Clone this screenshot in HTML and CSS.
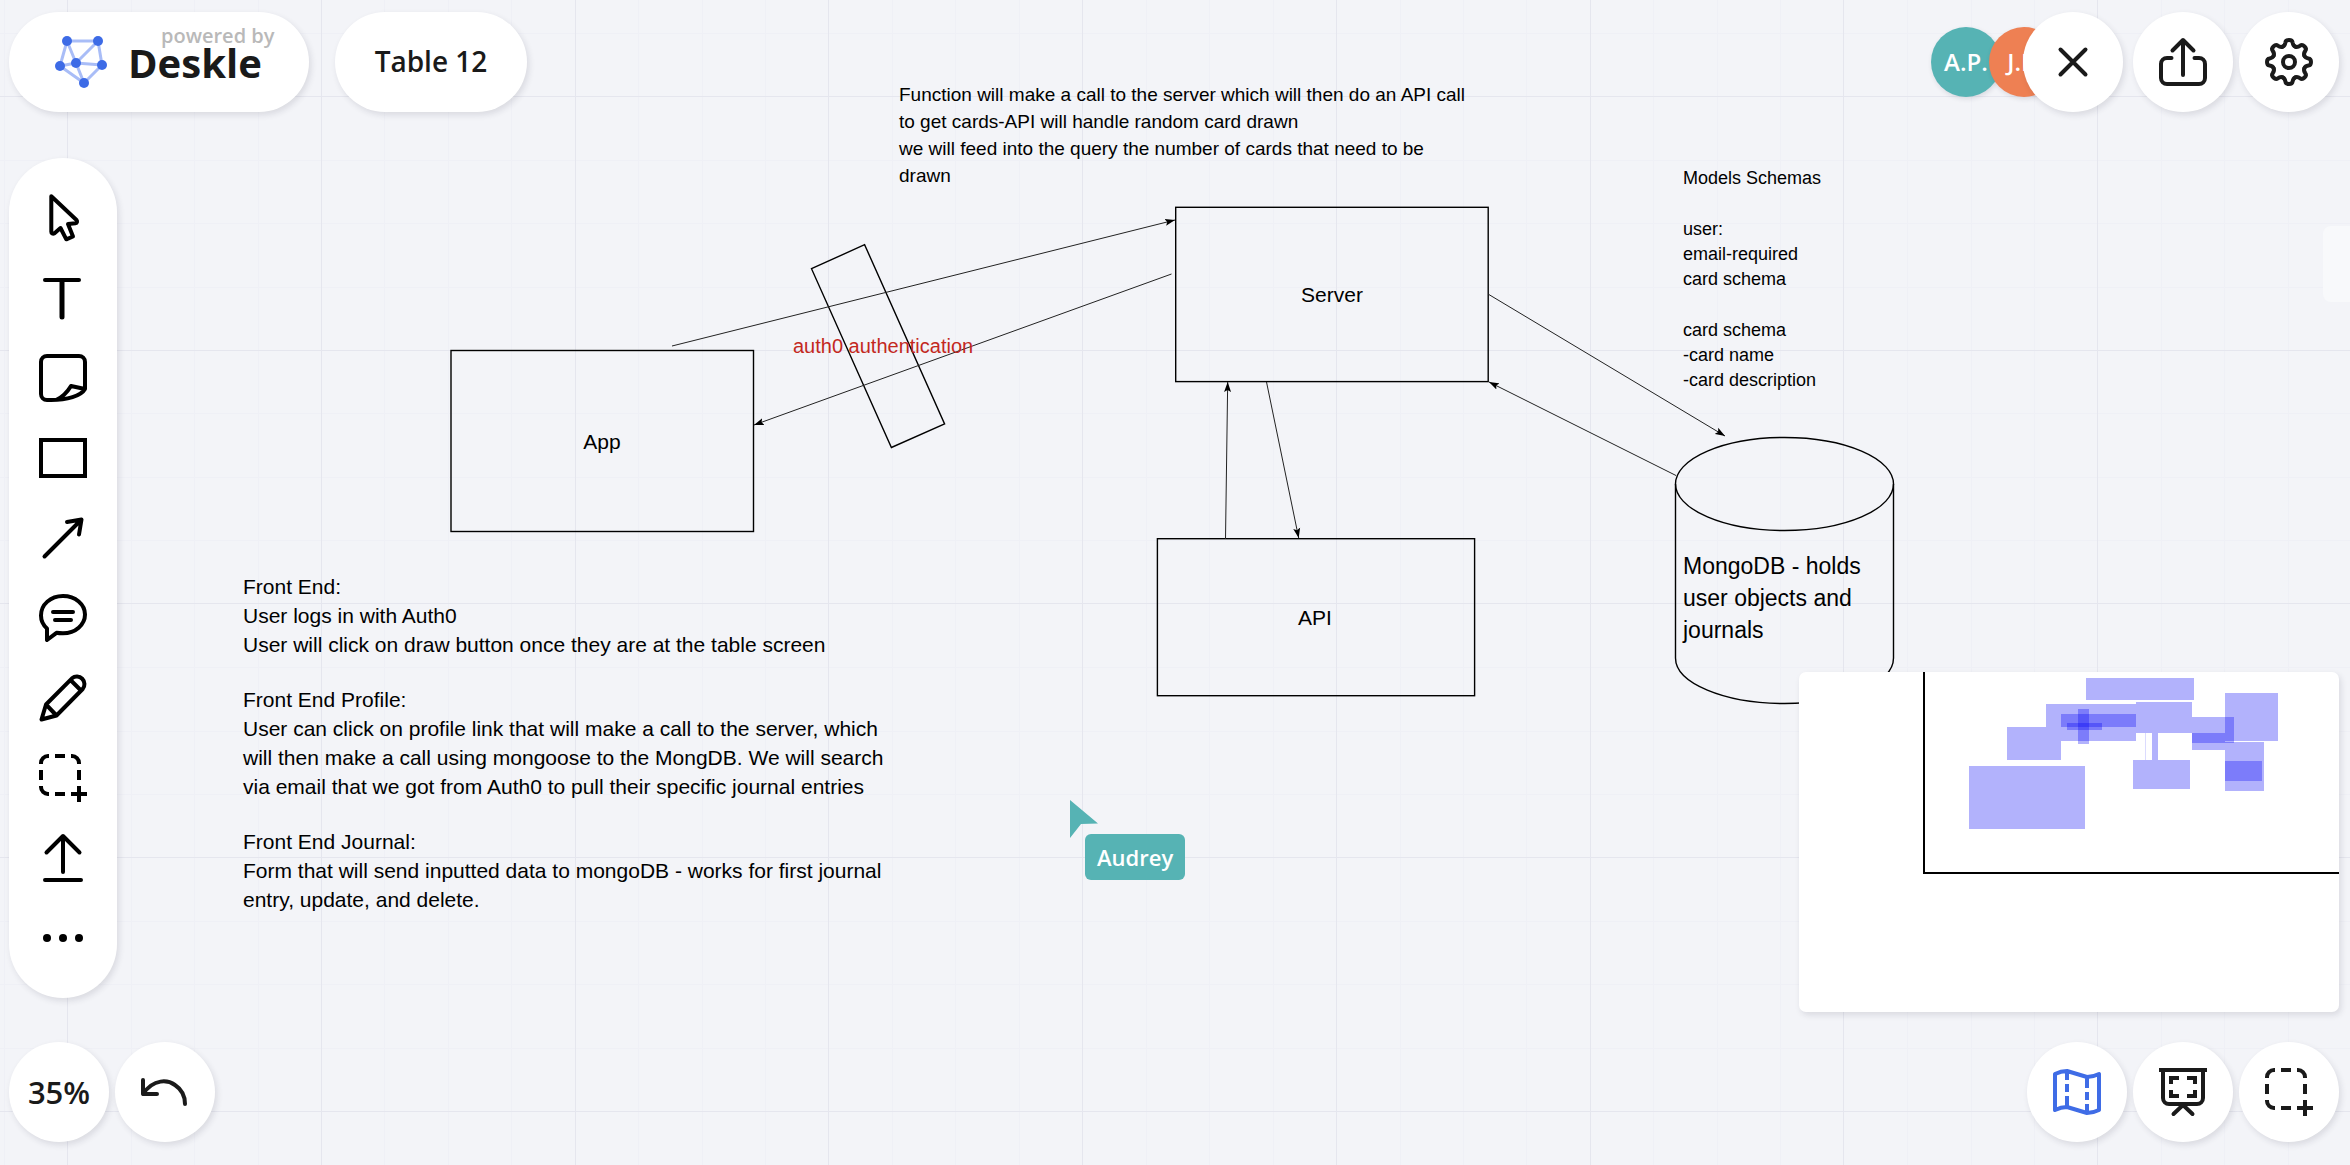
FILE: index.html
```html
<!DOCTYPE html>
<html lang="en">
<head>
<meta charset="utf-8">
<meta name="viewport" content="width=device-width, initial-scale=1">
<title>Table 12 - Deskle</title>
<link rel="stylesheet" href="styles.css">
</head>
<body>
<div class="board">

  <section class="canvas" aria-label="Board canvas">
    <svg class="canvas-art" aria-hidden="true">
      <defs>
        <marker id="head" viewBox="0 0 10 8" refX="10" refY="4" markerWidth="10" markerHeight="8" markerUnits="userSpaceOnUse" orient="auto">
          <path d="M0 0.5L10 4L0 7.5L2 4z" fill="#000"/>
        </marker>
      </defs>
      <path class="grid-minor" d="M4 0v4000M131 0v4000M194 0v4000M258 0v4000M384 0v4000M448 0v4000M511 0v4000M638 0v4000M702 0v4000M765 0v4000M892 0v4000M955 0v4000M1019 0v4000M1146 0v4000M1209 0v4000M1273 0v4000M1400 0v4000M1463 0v4000M1526 0v4000M1653 0v4000M1717 0v4000M1780 0v4000M1907 0v4000M1971 0v4000M2034 0v4000M2161 0v4000M2224 0v4000M2288 0v4000M0 33h6000M0 160h6000M0 223h6000M0 287h6000M0 413h6000M0 477h6000M0 540h6000M0 667h6000M0 731h6000M0 794h6000M0 921h6000M0 984h6000M0 1048h6000"/>
      <path class="grid-major" d="M67 0v4000M321 0v4000M575 0v4000M828 0v4000M1082 0v4000M1336 0v4000M1590 0v4000M1843 0v4000M2097 0v4000M0 96h6000M0 350h6000M0 603h6000M0 857h6000M0 1111h6000"/>
      <g class="shape">
        <rect x="451" y="350.5" width="302.500" height="181"/>
        <rect x="1175.700" y="207.300" width="312.500" height="174.300"/>
        <rect x="1157.400" y="538.700" width="317.200" height="157"/>
        <path d="M811.500 268.700L864.600 244.700L944.600 424L891.400 447.500z"/>
        <ellipse cx="1784.500" cy="484" rx="109" ry="46.500"/>
        <path d="M1675.500 484V658C1675.500 683 1724 703.500 1784.500 703.500S1893.500 683 1893.500 658V484"/>
      </g>
      <g class="arrow">
        <path d="M672 346L1175 220"/>
        <path d="M1171.500 274L754 425"/>
        <path d="M1488 294L1725 436"/>
        <path d="M1676 475.500L1489 382"/>
        <path d="M1225.500 539L1227.700 382"/>
        <path d="M1266.500 382L1298.700 538"/>
      </g>
      <g class="label">
        <text x="602" y="449">App</text>
        <text x="1332" y="302">Server</text>
        <text x="1315" y="625">API</text>
      </g>
    </svg>

    <p class="note note-function">Function will make a call to the server which will then do an API call<br>to get cards-API will handle random card drawn<br>we will feed into the query the number of cards that need to be<br>drawn</p>
    <p class="note note-auth">auth0 authentication</p>
    <p class="note note-mongo">MongoDB - holds<br>user objects and<br>journals</p>
    <div class="note note-models">
      <p>Models Schemas</p>
      <p>user:<br>email-required<br>card schema</p>
      <p>card schema<br>-card name<br>-card description</p>
    </div>
    <div class="note note-front">
      <p>Front End:<br>User logs in with Auth0<br>User will click on draw button once they are at the table screen</p>
      <p>Front End Profile:<br>User can click on profile link that will make a call to the server, which<br>will then make a call using mongoose to the MongDB. We will search<br>via email that we got from Auth0 to pull their specific journal entries</p>
      <p>Front End Journal:<br>Form that will send inputted data to mongoDB - works for first journal<br>entry, update, and delete.</p>
    </div>

    <div class="peer">
      <svg width="28" height="38" viewBox="0 0 28 38" aria-hidden="true"><path d="M0 0L28 23.500L11 24L0 38z" fill="#56b3b4"/></svg>
      <span class="peer-name">Audrey</span>
    </div>
  </section>

  <header class="topbar">
    <a class="pill brand" href="#">
      <svg width="54" height="54" viewBox="0 0 54 54" aria-hidden="true">
        <path d="M13 6H44M13 6L6 31M13 6L22 28M44 6L22 28M44 6L48 30M6 31L22 28M6 31L30 48M22 28L48 30M22 28L30 48M48 30L30 48" stroke="#a9bdf7" stroke-width="3" fill="none"/>
        <g fill="#3d6be6"><circle cx="13" cy="6" r="5"/><circle cx="44" cy="6" r="5"/><circle cx="6" cy="31" r="5"/><circle cx="22" cy="28" r="5"/><circle cx="48" cy="30" r="5"/><circle cx="30" cy="48" r="5"/></g>
      </svg>
      <span class="brand-text"><span class="brand-by">powered by</span><span class="brand-name">Deskle</span></span>
    </a>
    <button class="pill title" type="button">Table 12</button>
    <div class="people">
      <span class="avatar avatar-teal">A.P.</span>
      <span class="avatar avatar-orange">J.L.</span>
      <button class="round close" type="button" aria-label="Close">
        <svg class="icon" viewBox="0 0 48 48"><path d="M11.500 11.500L36.500 36.500M36.500 11.500L11.500 36.500"/></svg>
      </button>
    </div>
    <button class="round share" type="button" aria-label="Share">
      <svg class="icon" viewBox="0 0 48 48"><path d="M24 37V3M13.500 12.500L24 2L34.500 12.500M12.500 20H8a6 6 0 0 0-6 6V40a6 6 0 0 0 6 6H40a6 6 0 0 0 6-6V26a6 6 0 0 0-6-6H35.500"/></svg>
    </button>
    <button class="round" type="button" aria-label="Settings">
      <svg class="icon" viewBox="-24 -24 48 48">
        <circle r="6"/>
        <path id="tooth" d="M-6.400 -15.300C-4.600 -16 -3.900 -17.600 -3.600 -19.500C-3.200 -22.800 3.200 -22.800 3.600 -19.500C3.900 -17.600 4.600 -16 6.400 -15.300"/>
        <use href="#tooth" transform="rotate(45)"/><use href="#tooth" transform="rotate(90)"/><use href="#tooth" transform="rotate(135)"/><use href="#tooth" transform="rotate(180)"/><use href="#tooth" transform="rotate(225)"/><use href="#tooth" transform="rotate(270)"/><use href="#tooth" transform="rotate(315)"/>
      </svg>
    </button>
  </header>

  <main class="middle">
    <nav class="tools" aria-label="Tools">
      <button class="tool" type="button" aria-label="Select"><svg class="icon" viewBox="0 0 48 48"><path d="M12.300 2.300L37.500 26C38.600 27.500 38 29 36.500 29.200L29 30L34 42.500L27.300 45.300L21.500 34L15.500 39.300C13.800 40.300 12.300 39.500 12.300 37.700z"/></svg></button>
      <button class="tool" type="button" aria-label="Text"><svg class="icon" viewBox="0 0 48 48"><path d="M6 6H40"/><path d="M23 7V43" stroke-width="5"/></svg></button>
      <button class="tool" type="button" aria-label="Sticky note"><svg class="icon" viewBox="0 0 48 48"><path d="M46 35V8a6 6 0 0 0-6-6H8a6 6 0 0 0-6 6V40a6 6 0 0 0 6 6H12C28 46 42 42 46 35L32 32C29 37 24 43 17 46" stroke-linejoin="round"/></svg></button>
      <button class="tool" type="button" aria-label="Shape"><svg class="icon square" viewBox="0 0 48 48"><path d="M2 6H46V42H2z"/></svg></button>
      <button class="tool" type="button" aria-label="Arrow"><svg class="icon" viewBox="0 0 48 48"><path d="M5.500 42.500L42 6M28 8L42.500 5.500L40 20.500"/></svg></button>
      <button class="tool" type="button" aria-label="Comment"><svg class="icon" viewBox="0 0 48 48"><path d="M8 46V34.500C4 31 2 26.500 2 21.500C2 10.500 11.500 2 24 2S46 10.500 46 20.500S36.500 39.300 24 39.300C21.500 39.300 19.500 39.200 17.500 38.800zM14 18H34M16 26H32"/></svg></button>
      <button class="tool" type="button" aria-label="Pencil"><svg class="icon" viewBox="0 0 48 48"><path d="M2.500 45.500L7 30.500L33 4.300A7.600 7.600 0 0 1 43.700 15L17.500 41.500zM7 30.500L17.500 41.500M31.500 6L42 16.500"/></svg></button>
      <button class="tool" type="button" aria-label="Frame"><svg class="icon square" viewBox="0 0 48 48"><path d="M10 2H9A7 7 0 0 0 2 9V10M32 2H33A7 7 0 0 1 40 9V10M2 32V33A7 7 0 0 0 9 40H10M16 2H26M16 40H26M2 16V26M40 16V26M32 40H48M40 32V48"/></svg></button>
      <button class="tool" type="button" aria-label="Upload"><svg class="icon" viewBox="0 0 48 48"><path d="M24 38V2M7.500 18.500L24 2L40.500 18.500M6 46H42"/></svg></button>
      <button class="tool" type="button" aria-label="More"><svg class="icon dots" viewBox="0 0 48 48"><circle cx="8" cy="24" r="4"/><circle cx="24" cy="24" r="4"/><circle cx="40" cy="24" r="4"/></svg></button>
    </nav>

    <aside class="side">
      <div class="side-tab"></div>
      <div class="minimap">
        <svg viewBox="0 0 540 340" role="img" aria-label="Map of the board">
          <g fill="#0000f5" fill-opacity=".3">
            <rect x="287" y="6" width="108" height="22"/>
            <rect x="426" y="21" width="53" height="48"/>
            <rect x="247" y="32" width="90" height="23"/>
            <rect x="262" y="42" width="75" height="27"/>
            <rect x="279" y="37" width="11" height="35"/>
            <rect x="268" y="51" width="35" height="7"/>
            <rect x="337" y="30" width="56" height="31"/>
            <rect x="208" y="55" width="54" height="33"/>
            <rect x="170" y="94" width="116" height="63"/>
            <rect x="346" y="61" width="1" height="27" fill-opacity=".14"/>
            <rect x="353" y="61" width="6" height="27"/>
            <rect x="334" y="88" width="57" height="29"/>
            <rect x="393" y="45" width="42" height="26"/>
            <rect x="393" y="61" width="33" height="17"/>
            <rect x="426" y="70" width="39" height="49"/>
            <rect x="426" y="89" width="37" height="20"/>
          </g>
          <path d="M125 0V201H540" fill="none" stroke="#000" stroke-width="2"/>
        </svg>
      </div>
    </aside>
  </main>

  <footer class="bottombar">
    <button class="round zoom" type="button">35%</button>
    <button class="round" type="button" aria-label="Undo"><svg class="icon" viewBox="0 0 48 48"><path d="M2 12V26H16M2 26C13 10 27 12 34 17C40 21 44 28 44 36"/></svg></button>
    <span class="spacer"></span>
    <button class="round active" type="button" aria-label="Map"><svg class="icon butt" viewBox="0 0 48 48"><path d="M2 6Q8 3 14 3Q24 6 34 9Q40 9 46 6V42Q40 45 34 45Q24 42 14 39Q8 39 2 42zM14 4V12M14 16V24M14 28V38M34 9V20M34 24V32M34 36V45"/></svg></button>
    <button class="round" type="button" aria-label="Present"><svg class="icon" viewBox="0 0 48 48"><path stroke-linecap="butt" class="butt" d="M0 2H48"/><path d="M4 3V30a6 6 0 0 0 6 6H38a6 6 0 0 0 6-6V3M24 37L14.500 46M24 37L33.500 46"/><path class="corners" d="M20 10H12V16M28 10H36V16M20 28H12V22M28 28H36V22"/></svg></button>
    <button class="round" type="button" aria-label="Add frame"><svg class="icon square" viewBox="0 0 48 48"><path d="M10 2H9A7 7 0 0 0 2 9V10M32 2H33A7 7 0 0 1 40 9V10M2 32V33A7 7 0 0 0 9 40H10M16 2H26M16 40H26M2 16V26M40 16V26M32 40H48M40 32V48"/></svg></button>
  </footer>
</div>
</body>
</html>
```
FILE: styles.css
```css
* {
  box-sizing: border-box;
}

body {
  margin: 0;
  background: #f3f4f8;
  color: #1a1a1a;
  font-family: "Open Sans", "Noto Sans", sans-serif;
}

button {
  border: 0;
  padding: 0;
  color: inherit;
  font: inherit;
  cursor: pointer;
}

.board {
  position: relative;
  display: flex;
  flex-direction: column;
  min-height: 100vh;
  overflow: hidden;
}

/* Canvas: free-placed items under the interface */
.canvas {
  position: absolute;
  inset: 0;
  overflow: hidden;
  color: #000;
  font-family: "Liberation Sans", Arial, sans-serif;
}

.canvas-art {
  position: absolute;
  inset: 0;
  width: 100%;
  height: 100%;
}

.grid-minor,
.grid-major {
  fill: none;
  stroke: #eff0f6;
  stroke-width: 1;
  shape-rendering: crispEdges;
}

.grid-major {
  stroke: #e5e6ee;
}

.shape {
  fill: none;
  stroke: #000;
  stroke-width: 1.4;
}

.arrow {
  fill: none;
  stroke: #222;
  stroke-width: 1;
}

.arrow path {
  marker-end: url(#head);
}

.label {
  font-size: 21px;
  text-anchor: middle;
}

.note {
  position: absolute;
  margin: 0;
  white-space: nowrap;
}

.note p {
  margin: 0;
}

.note-function {
  left: 899px;
  top: 81px;
  font-size: 19px;
  line-height: 27px;
}

.note-auth {
  left: 793px;
  top: 332px;
  color: #c3281e;
  font-size: 20px;
  line-height: 29px;
}

.note-mongo {
  left: 1683px;
  top: 550px;
  font-size: 23px;
  line-height: 32px;
}

.note-models {
  left: 1683px;
  top: 166px;
  font-size: 18px;
  line-height: 25px;
}

.note-front {
  left: 243px;
  top: 572px;
  font-size: 21px;
  line-height: 29px;
}

.note-models,
.note-front {
  display: flex;
  flex-direction: column;
  gap: 26px;
}

.peer {
  position: absolute;
  left: 1070px;
  top: 800px;
  font-family: "Open Sans", "Noto Sans", sans-serif;
}

.peer svg {
  display: block;
}

.peer-name {
  position: absolute;
  left: 15px;
  top: 34px;
  padding: 0 12px;
  border-radius: 6px;
  background: #56b3b4;
  color: #fff;
  font-size: 22px;
  font-weight: 600;
  line-height: 46px;
}

/* Interface */
.topbar,
.bottombar {
  position: relative;
  display: flex;
  align-items: center;
  gap: 6px;
  padding: 12px 11px 0 9px;
}

.bottombar {
  padding: 0 11px 23px 9px;
}

.pill,
.round,
.tools,
.minimap {
  background: #fff;
  box-shadow: 2px 3px 6px rgba(30, 35, 60, 0.12);
}

.pill {
  height: 100px;
  border-radius: 50px;
}

.brand {
  display: flex;
  align-items: center;
  gap: 20px;
  width: 300px;
  padding: 0 0 0 45px;
  color: inherit;
  text-decoration: none;
}

.brand-text {
  display: flex;
  flex-direction: column;
  padding-bottom: 18px;
}

.brand-by {
  padding-left: 33px;
  color: #b9b9b9;
  font-size: 20px;
  font-weight: 600;
  line-height: 20px;
}

.brand-name {
  font-size: 40px;
  font-weight: 700;
  line-height: 34px;
}

.title {
  width: 192px;
  margin: 0 auto 0 20px;
  padding-bottom: 2px;
  font-size: 28px;
  font-weight: 600;
}

.people {
  display: flex;
  align-items: center;
}

.avatar {
  width: 70px;
  height: 70px;
  margin-right: -12px;
  border-radius: 50%;
  box-shadow: 1px 2px 5px rgba(30, 35, 60, 0.12);
  color: #fff;
  font-size: 24px;
  font-weight: 600;
  line-height: 70px;
  text-align: center;
}

.avatar-teal {
  background: #56b3b4;
}

.avatar-orange {
  position: relative;
  margin-right: -36px;
  background: #ee8053;
}

.round {
  position: relative;
  display: flex;
  flex: none;
  align-items: center;
  justify-content: center;
  width: 100px;
  height: 100px;
  border-radius: 50%;
}

.share {
  margin-left: 4px;
}

.zoom {
  font-size: 31px;
  font-weight: 600;
}

.active {
  color: #3f6ce6;
}

.icon {
  display: block;
  width: 48px;
  height: 48px;
  overflow: visible;
  fill: none;
  stroke: currentColor;
  stroke-width: 4;
  stroke-linecap: round;
  stroke-linejoin: round;
}

.square {
  stroke-linecap: butt;
  stroke-linejoin: miter;
}

.butt {
  stroke-linecap: butt;
}

.corners {
  stroke-linecap: butt;
  stroke-linejoin: miter;
}

.dots {
  fill: currentColor;
  stroke: none;
}

.middle {
  position: relative;
  display: flex;
  flex: 1;
  align-items: flex-start;
  justify-content: space-between;
  padding-left: 9px;
}

.tools {
  display: flex;
  flex-direction: column;
  width: 108px;
  margin: 46px 0 44px;
  padding: 20px 0;
  border-radius: 54px;
  color: #000;
}

.tool {
  display: flex;
  align-items: center;
  justify-content: center;
  height: 80px;
  background: none;
}

.side {
  display: flex;
  flex-direction: column;
  align-items: flex-end;
  align-self: stretch;
  justify-content: space-between;
  padding: 114px 0 30px;
}

.side-tab {
  width: 27px;
  height: 76px;
  border-radius: 8px 0 0 8px;
  background: #f8f9fb;
}

.minimap {
  width: 540px;
  margin-right: 11px;
  border-radius: 7px;
}

.minimap svg {
  display: block;
  width: 100%;
}

.spacer {
  flex: 1;
}
```
